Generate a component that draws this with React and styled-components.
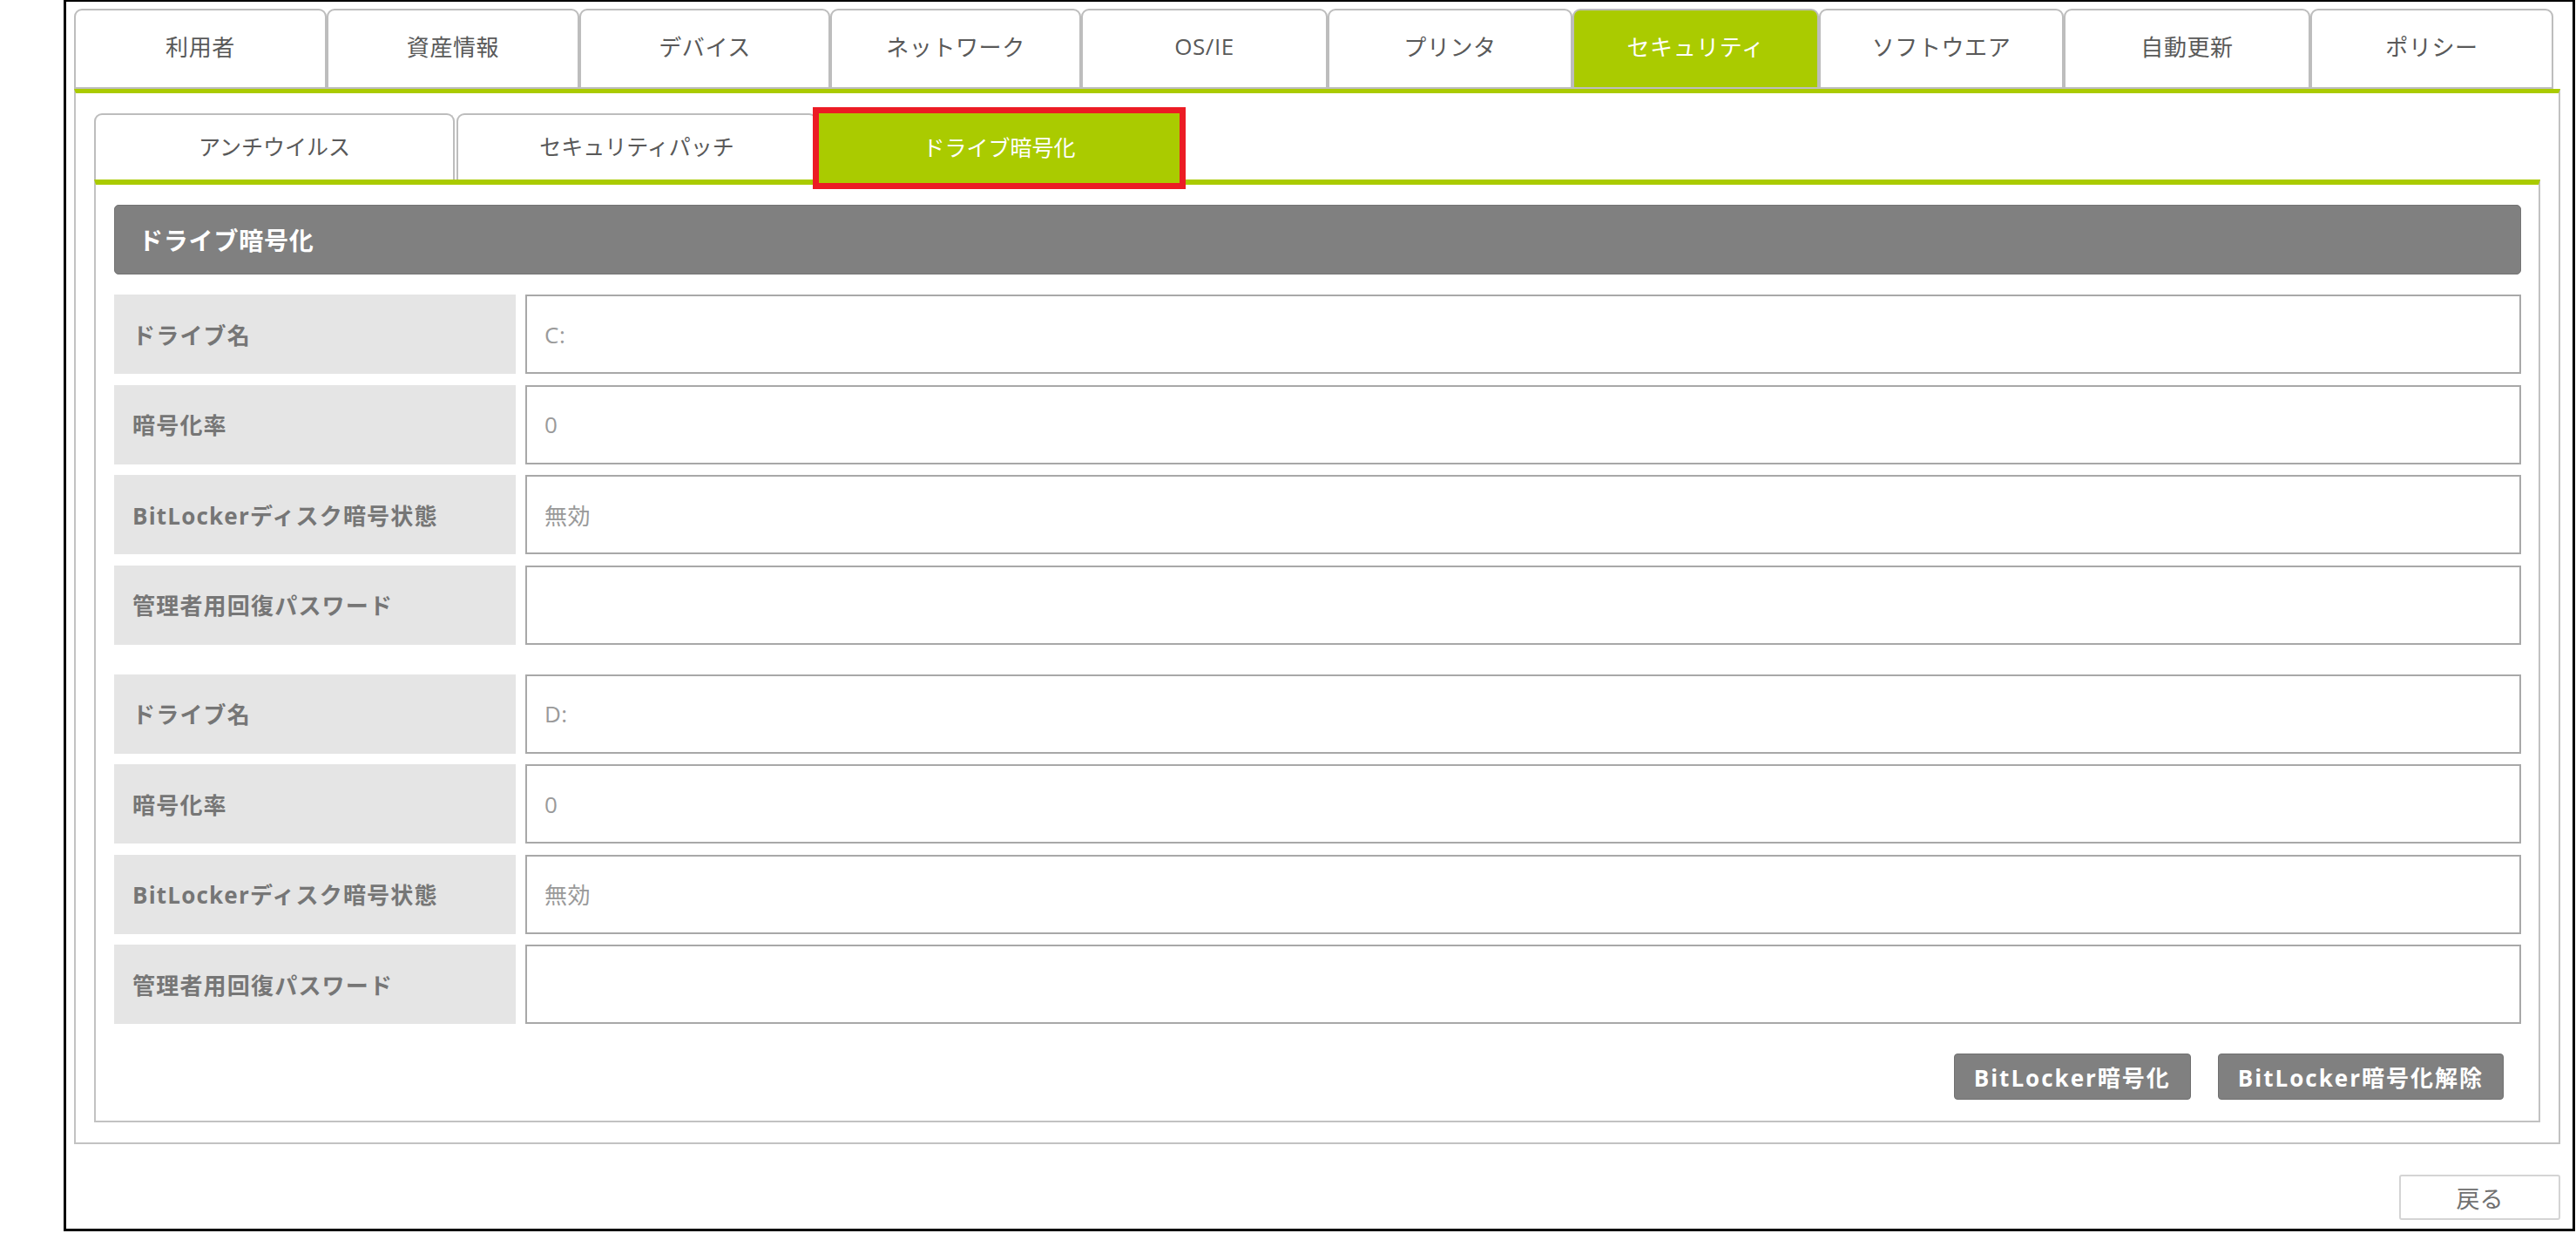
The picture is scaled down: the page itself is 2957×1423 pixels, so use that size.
import React from "react";
import styled, { createGlobalStyle, css } from "styled-components";

const GREEN = "#aacb00";
const LINE = "#c2c2c2";

const GlobalStyle = createGlobalStyle`
  html, body {
    margin: 0;
    padding: 0;
    background: #ffffff;
  }
  body {
    font-family: "Open Sans", "Noto Sans CJK JP", sans-serif;
  }
`;

const Frame = styled.div`
  box-sizing: border-box;
  margin-left: 73px;
  width: 2883px;
  height: 1413px;
  border: 3px solid #000;
  border-top-width: 2px;
  padding: 8px 13px 0 9px;
  display: flex;
  flex-direction: column;
`;

const TabBar = styled.div`
  display: flex;
  align-items: flex-end;
`;

const MainTab = styled.div`
  box-sizing: border-box;
  height: 92px;
  border: 2px solid #bdbdbd;
  border-radius: 9px 9px 0 0;
  background: ${(p) => (p.$active ? GREEN : "#fff")};
  color: ${(p) => (p.$active ? "#fff" : "#595959")};
  font-size: 26px;
  letter-spacing: 0.6px;
  display: flex;
  align-items: center;
  justify-content: center;
  padding-bottom: 6px;
`;

const MainPanel = styled.div`
  box-sizing: border-box;
  width: 2854px;
  border: 2px solid ${LINE};
  border-top: 5px solid ${GREEN};
  padding: 23px 21px 23px 21px;
`;

const SubTabBar = styled.div`
  display: flex;
  gap: 2px;
  align-items: flex-end;
  height: 76px;
`;

const SubTab = styled.div`
  box-sizing: border-box;
  width: 414px;
  height: 76px;
  border: 2px solid #bdbdbd;
  border-bottom: none;
  border-radius: 9px 9px 0 0;
  background: #fff;
  color: #595959;
  font-size: 25px;
  display: flex;
  align-items: center;
  justify-content: center;
  padding-bottom: 4px;
  ${(p) =>
    p.$active &&
    css`
      height: 80px;
      margin-bottom: -4px;
      border: none;
      border-radius: 0;
      background: ${GREEN};
      color: #fff;
      position: relative;
      z-index: 1;
      outline: 7px solid #ec1c24;
    `}
`;

const SubPanel = styled.div`
  box-sizing: border-box;
  border: 2px solid ${LINE};
  border-top: 6px solid ${GREEN};
  padding: 23px 20px 24px 21px;
  display: flex;
  flex-direction: column;
`;

const SectionHeader = styled.div`
  box-sizing: border-box;
  height: 80px;
  background: #808080;
  border: 1px solid #737373;
  border-radius: 5px;
  color: #fff;
  font-weight: 700;
  font-size: 28px;
  letter-spacing: 0.8px;
  display: flex;
  align-items: center;
  padding-left: 27px;
  margin-bottom: 23px;
`;

const Group = styled.div`
  display: grid;
  grid-template-columns: 461px 1fr;
  grid-auto-rows: 91px;
  column-gap: 11px;
  row-gap: 12.5px;
  & + & {
    margin-top: 34px;
  }
`;

const Label = styled.div`
  background: #e5e5e5;
  color: #767676;
  font-weight: 700;
  font-size: 26px;
  letter-spacing: 1.2px;
  display: flex;
  align-items: center;
  padding-left: 21px;
`;

const Value = styled.div`
  box-sizing: border-box;
  border: 2px solid #a8a8a8;
  color: #9a9a9a;
  font-size: 26px;
  letter-spacing: 0.5px;
  display: flex;
  align-items: center;
  padding-left: 20px;
`;

const ButtonRow = styled.div`
  display: flex;
  justify-content: flex-end;
  gap: 31px;
  margin-top: 34px;
  padding-right: 20px;
`;

const ActionButton = styled.button`
  box-sizing: border-box;
  height: 53px;
  padding: 0 22px;
  background: #808080;
  border: 1px solid #707070;
  border-radius: 4px;
  color: #fff;
  font-family: "Open Sans", "Noto Sans CJK JP", sans-serif;
  font-weight: 700;
  font-size: 26px;
  letter-spacing: 2px;
`;

const Footer = styled.div`
  display: flex;
  justify-content: flex-end;
  width: 2854px;
  margin-top: 35px;
`;

const BackButton = styled.button`
  box-sizing: border-box;
  width: 185px;
  height: 52px;
  background: #fff;
  border: 2px solid #d4d4d4;
  border-radius: 3px;
  color: #707070;
  font-family: "Open Sans", "Noto Sans CJK JP", sans-serif;
  font-size: 27px;
`;

const mainTabs = [
  ["利用者", 290],
  ["資産情報", 290],
  ["デバイス", 288],
  ["ネットワーク", 288],
  ["OS/IE", 283],
  ["プリンタ", 281],
  ["セキュリティ", 283],
  ["ソフトウエア", 281],
  ["自動更新", 283],
  ["ポリシー", 279],
];

const subTabs = ["アンチウイルス", "セキュリティパッチ", "ドライブ暗号化"];

const drives = [
  { name: "C:", rate: "0", state: "無効", password: "" },
  { name: "D:", rate: "0", state: "無効", password: "" },
];

const DriveGroup = ({ drive }) => (
  <Group>
    <Label>ドライブ名</Label>
    <Value>{drive.name}</Value>
    <Label>暗号化率</Label>
    <Value>{drive.rate}</Value>
    <Label>BitLockerディスク暗号状態</Label>
    <Value>{drive.state}</Value>
    <Label>管理者用回復パスワード</Label>
    <Value>{drive.password}</Value>
  </Group>
);

const App = () => {
  return (
    <>
      <GlobalStyle />
      <Frame>
        <TabBar>
          {mainTabs.map(([label, width]) => (
            <MainTab
              key={label}
              $active={label === "セキュリティ"}
              style={{ width }}
            >
              {label}
            </MainTab>
          ))}
        </TabBar>
        <MainPanel>
          <SubTabBar>
            {subTabs.map((label) => (
              <SubTab key={label} $active={label === "ドライブ暗号化"}>
                {label}
              </SubTab>
            ))}
          </SubTabBar>
          <SubPanel>
            <SectionHeader>ドライブ暗号化</SectionHeader>
            {drives.map((d) => (
              <DriveGroup key={d.name} drive={d} />
            ))}
            <ButtonRow>
              <ActionButton>BitLocker暗号化</ActionButton>
              <ActionButton>BitLocker暗号化解除</ActionButton>
            </ButtonRow>
          </SubPanel>
        </MainPanel>
        <Footer>
          <BackButton>戻る</BackButton>
        </Footer>
      </Frame>
    </>
  );
};

export default App;
